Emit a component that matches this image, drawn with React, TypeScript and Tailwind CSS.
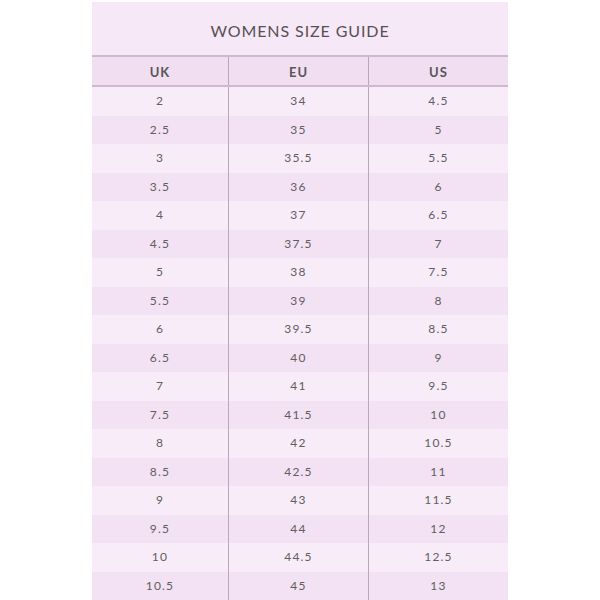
const rows: [string, string, string][] = [
  ['2', '34', '4.5'],
  ['2.5', '35', '5'],
  ['3', '35.5', '5.5'],
  ['3.5', '36', '6'],
  ['4', '37', '6.5'],
  ['4.5', '37.5', '7'],
  ['5', '38', '7.5'],
  ['5.5', '39', '8'],
  ['6', '39.5', '8.5'],
  ['6.5', '40', '9'],
  ['7', '41', '9.5'],
  ['7.5', '41.5', '10'],
  ['8', '42', '10.5'],
  ['8.5', '42.5', '11'],
  ['9', '43', '11.5'],
  ['9.5', '44', '12'],
  ['10', '44.5', '12.5'],
  ['10.5', '45', '13'],
]

export default function App() {
  return (
    <div className="w-[600px] h-[600px] bg-white overflow-hidden font-['Lato',sans-serif]">
      <div className="mx-auto mt-[2px] w-[416px] bg-[#f6e8f6]">
        <div className="h-[55px] flex items-center justify-center border-b-2 border-[#cdb8cd]">
          <h1 className="text-[16px] tracking-[0.9px] text-[#555055] pt-[4px]">WOMENS SIZE GUIDE</h1>
        </div>
        <div className="grid grid-cols-[136px_140px_140px] h-[30px] bg-[#f1def1] border-b-2 border-[#cdb8cd] text-[13px] font-bold tracking-[1px] text-[#5a555a]">
          <div className="flex items-center justify-center pt-[3px]">UK</div>
          <div className="flex items-center justify-center pt-[3px] border-l border-[#bba6bb]">EU</div>
          <div className="flex items-center justify-center pt-[3px] border-l border-[#bba6bb]">US</div>
        </div>
        {rows.map((r, i) => (
          <div
            key={r[0]}
            className={
              'grid grid-cols-[136px_140px_140px] h-[28.5px] text-[12px] tracking-[1.2px] text-[#625d62] ' +
              (i % 2 === 0 ? 'bg-[#f8ecf8]' : 'bg-[#f3e2f3]')
            }
          >
            <div className="flex items-center justify-center">{r[0]}</div>
            <div className="flex items-center justify-center border-l border-[#bba6bb]">{r[1]}</div>
            <div className="flex items-center justify-center border-l border-[#bba6bb]">{r[2]}</div>
          </div>
        ))}
      </div>
    </div>
  )
}
